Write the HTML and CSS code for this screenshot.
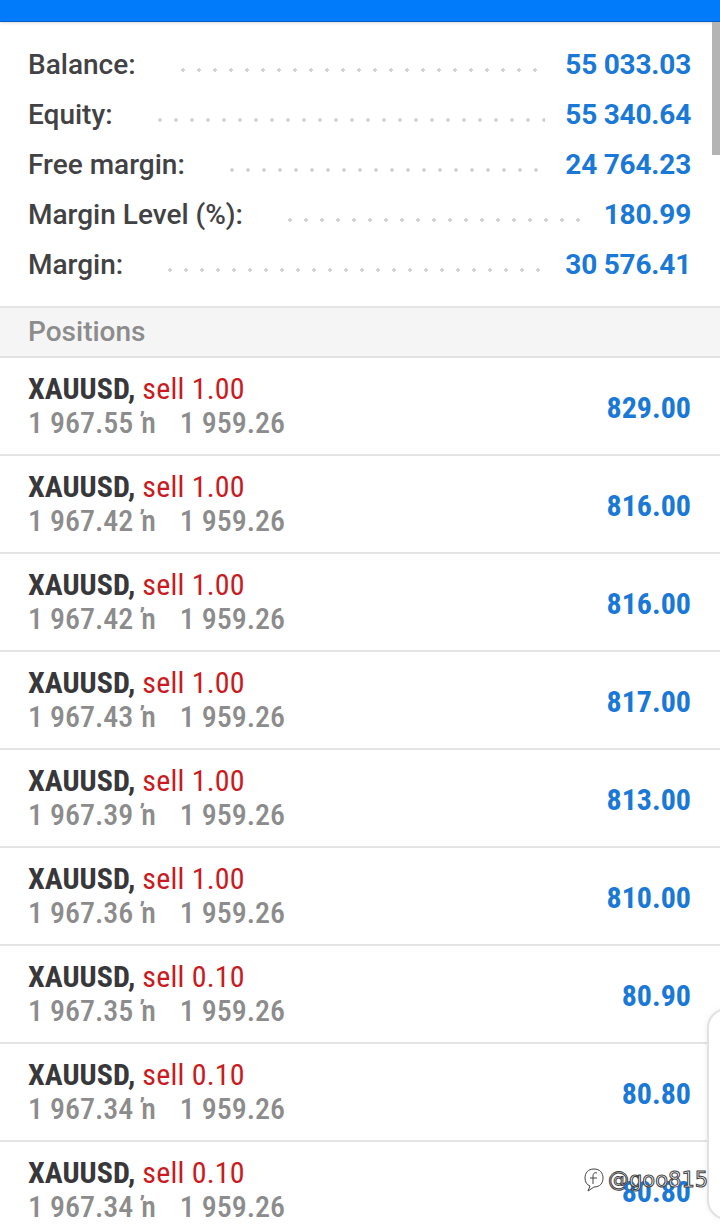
FILE: index.html
```html
<html>

<head>
<title>Trade</title>
<link rel="stylesheet" href="styles.css">
</head>

<body>

<div class="topbar"></div>
<div class="scrollbar"></div>

<div class="summary">
	<div class="summary-row">
		<span class="summary-label">Balance:</span>
		<span class="leader"></span>
		<span class="summary-value">55 033.03</span>
	</div>
	<div class="summary-row">
		<span class="summary-label">Equity:</span>
		<span class="leader"></span>
		<span class="summary-value">55 340.64</span>
	</div>
	<div class="summary-row">
		<span class="summary-label">Free margin:</span>
		<span class="leader"></span>
		<span class="summary-value">24 764.23</span>
	</div>
	<div class="summary-row">
		<span class="summary-label">Margin Level (%):</span>
		<span class="leader"></span>
		<span class="summary-value">180.99</span>
	</div>
	<div class="summary-row">
		<span class="summary-label">Margin:</span>
		<span class="leader"></span>
		<span class="summary-value">30 576.41</span>
	</div>
</div>

<div class="section-head">Positions</div>

<div class="positions">
	<div class="position">
		<div class="position-info">
			<div class="position-title"><span class="symbol">XAUUSD,</span> <span class="side">sell 1.00</span></div>
			<div class="position-prices">1 967.55 <span class="arrow">ŉ</span>1 959.26</div>
		</div>
		<span class="position-profit">829.00</span>
	</div>
	<div class="position">
		<div class="position-info">
			<div class="position-title"><span class="symbol">XAUUSD,</span> <span class="side">sell 1.00</span></div>
			<div class="position-prices">1 967.42 <span class="arrow">ŉ</span>1 959.26</div>
		</div>
		<span class="position-profit">816.00</span>
	</div>
	<div class="position">
		<div class="position-info">
			<div class="position-title"><span class="symbol">XAUUSD,</span> <span class="side">sell 1.00</span></div>
			<div class="position-prices">1 967.42 <span class="arrow">ŉ</span>1 959.26</div>
		</div>
		<span class="position-profit">816.00</span>
	</div>
	<div class="position">
		<div class="position-info">
			<div class="position-title"><span class="symbol">XAUUSD,</span> <span class="side">sell 1.00</span></div>
			<div class="position-prices">1 967.43 <span class="arrow">ŉ</span>1 959.26</div>
		</div>
		<span class="position-profit">817.00</span>
	</div>
	<div class="position">
		<div class="position-info">
			<div class="position-title"><span class="symbol">XAUUSD,</span> <span class="side">sell 1.00</span></div>
			<div class="position-prices">1 967.39 <span class="arrow">ŉ</span>1 959.26</div>
		</div>
		<span class="position-profit">813.00</span>
	</div>
	<div class="position">
		<div class="position-info">
			<div class="position-title"><span class="symbol">XAUUSD,</span> <span class="side">sell 1.00</span></div>
			<div class="position-prices">1 967.36 <span class="arrow">ŉ</span>1 959.26</div>
		</div>
		<span class="position-profit">810.00</span>
	</div>
	<div class="position">
		<div class="position-info">
			<div class="position-title"><span class="symbol">XAUUSD,</span> <span class="side">sell 0.10</span></div>
			<div class="position-prices">1 967.35 <span class="arrow">ŉ</span>1 959.26</div>
		</div>
		<span class="position-profit">80.90</span>
	</div>
	<div class="position">
		<div class="position-info">
			<div class="position-title"><span class="symbol">XAUUSD,</span> <span class="side">sell 0.10</span></div>
			<div class="position-prices">1 967.34 <span class="arrow">ŉ</span>1 959.26</div>
		</div>
		<span class="position-profit">80.80</span>
	</div>
	<div class="position">
		<div class="position-info">
			<div class="position-title"><span class="symbol">XAUUSD,</span> <span class="side">sell 0.10</span></div>
			<div class="position-prices">1 967.34 <span class="arrow">ŉ</span>1 959.26</div>
		</div>
		<span class="position-profit">80.80</span>
	</div>
</div>

<div class="side-handle"></div>

<div class="watermark">
	<svg class="watermark-logo" width="22" height="28" viewBox="0 0 22 28">
		<path d="M11 3 C5 3 2 7 2 12 C2 16 4 19 7 20 L5 25 L11 21 C17 21 20 17 20 12 C20 7 17 3 11 3 Z" fill="none" stroke="#fff" stroke-width="3"/>
		<path d="M11 3 C5 3 2 7 2 12 C2 16 4 19 7 20 L5 25 L11 21 C17 21 20 17 20 12 C20 7 17 3 11 3 Z" fill="none" stroke="#444" stroke-width="1"/>
		<path d="M14 7 C11 6 10 8 10 10 L10 18 M7 12 L14 12" fill="none" stroke="#fff" stroke-width="3"/>
		<path d="M14 7 C11 6 10 8 10 10 L10 18 M7 12 L14 12" fill="none" stroke="#444" stroke-width="1"/>
	</svg>
	<span class="watermark-text">@goo815</span>
</div>

</body>

</html>
```

FILE: styles.css
```css
html, body {
	margin: 0;
	padding: 0;
}

body {
	width: 720px;
	height: 1226px;
	overflow: hidden;
	position: relative;
	background-color: white;
	font-family: "Roboto", "Noto Sans", sans-serif;
}

.topbar {
	height: 21px;
	background-color: rgb(2, 123, 250);
	border-bottom: 1px solid rgb(0, 96, 200);
	box-shadow: 0 1px 3px rgba(0, 0, 0, 0.15);
}

.scrollbar {
	position: absolute;
	top: 22px;
	right: 0;
	width: 8px;
	height: 133px;
	background-color: rgb(180, 180, 180);
}

.summary {
	padding: 18px 29px 16px 28px;
	border-bottom: 2px solid rgb(228, 228, 228);
}

.summary-row {
	display: flex;
	flex-direction: row;
	align-items: stretch;
	height: 50px;
	line-height: 50px;
}

.summary-label {
	font-size: 28px;
	font-weight: 500;
	color: rgb(66, 66, 68);
}

.leader {
	flex-grow: 1;
	margin: 0 20px 0 39px;
	background-image: radial-gradient(circle, rgb(208, 208, 208) 1.5px, transparent 2px);
	background-size: 16px 6px;
	background-repeat: repeat-x;
	background-position: left 0 top 27px;
}

.summary-value {
	font-size: 28px;
	font-weight: 700;
	color: rgb(26, 120, 214);
	letter-spacing: -0.2px;
}

.section-head {
	height: 48px;
	line-height: 48px;
	padding-left: 28px;
	background-color: rgb(245, 245, 245);
	border-bottom: 2px solid rgb(226, 226, 226);
	font-size: 28px;
	font-weight: 500;
	color: rgb(140, 140, 140);
}

.position {
	display: flex;
	flex-direction: row;
	justify-content: space-between;
	align-items: center;
	height: 96px;
	padding: 0 29px 0 28px;
	border-bottom: 2px solid rgb(228, 228, 228);
}

.position-info {
	display: flex;
	flex-direction: column;
	font-family: "Roboto Condensed", "Roboto", sans-serif;
}

.position-title, .position-prices {
	height: 34px;
	line-height: 34px;
	font-size: 30px;
	white-space: nowrap;
}

.symbol {
	font-weight: 700;
	color: rgb(56, 56, 58);
}

.side {
	color: rgb(200, 28, 34);
	letter-spacing: 0.2px;
}

.position-prices {
	font-weight: 500;
	color: rgb(140, 140, 140);
}

.arrow {
	margin-left: 1px;
	margin-right: 24px;
}

.position-profit {
	font-family: "Roboto Condensed", "Roboto", sans-serif;
	font-size: 30px;
	font-weight: 700;
	color: rgb(26, 120, 214);
	padding-top: 2px;
}

.side-handle {
	position: absolute;
	left: 707px;
	top: 1008px;
	width: 40px;
	height: 208px;
	background-color: white;
	border: 2px solid rgb(226, 226, 226);
	border-radius: 20px;
	box-shadow: -1px 0 4px rgba(0, 0, 0, 0.06);
}

.watermark {
	position: absolute;
	left: 583px;
	top: 1166px;
	display: flex;
	flex-direction: row;
	align-items: center;
}

.watermark-logo {
	margin-right: 3px;
}

.watermark-text {
	font-family: "DejaVu Sans", sans-serif;
	font-size: 21px;
	color: white;
	-webkit-text-stroke: 1px rgb(60, 60, 60);
}
```
